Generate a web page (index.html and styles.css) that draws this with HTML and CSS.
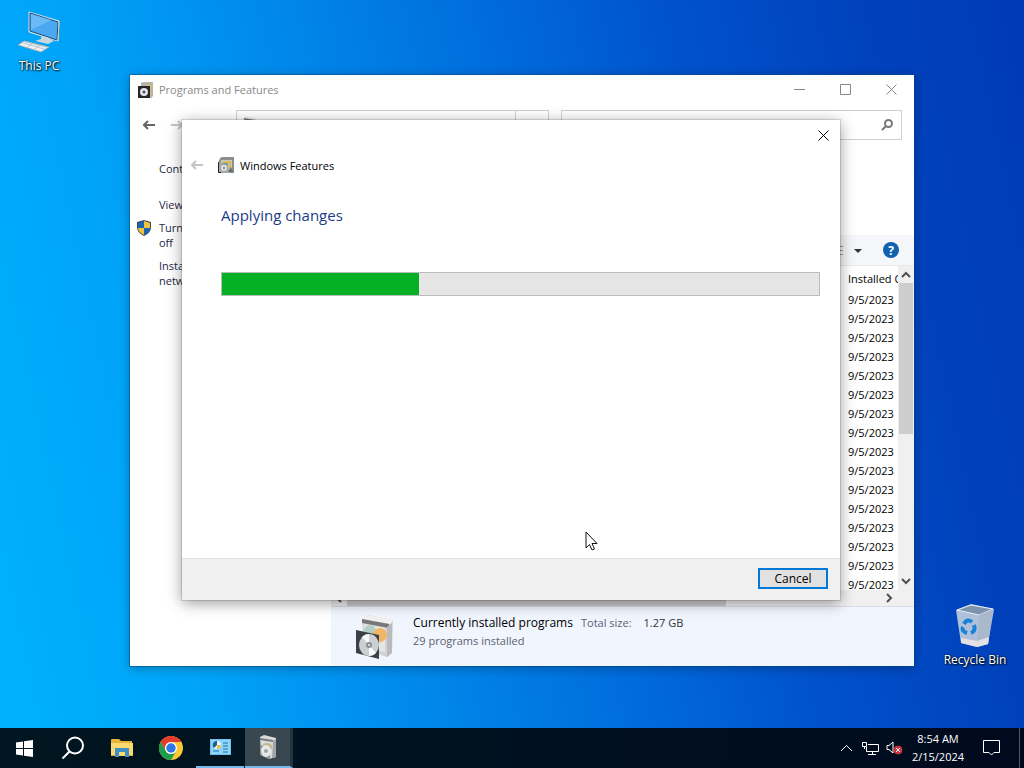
FILE: index.html
```html
<!DOCTYPE html>
<html lang="en">
<head>
    <meta charset="UTF-8">
    <meta name="viewport" content="width=device-width, initial-scale=1.0">
    <title>Windows Features</title>
    <link rel="stylesheet" href="styles.css">
</head>
<body>
    <!-- shared program box icon -->
    <svg class="symbols" aria-hidden="true">
        <symbol id="box-icon" viewBox="0 0 40 46">
            <path d="M7 6 L12 1 L38 6 L37 39 L32 43 L9 36 Z" fill="#d3d3d2"/>
            <path d="M12 1 L38 6 L36 10 L7 5 Z" fill="#f0f0ee"/>
            <path d="M7 5 L34 10 L34 14 L7 9 Z" fill="#77777a"/>
            <path d="M9 10 L30 14 L30 38 L9 34 Z" fill="#e3e9e2"/>
            <path d="M32 13 L37 9 L37 39 L32 43 Z" fill="#b9babd"/>
            <circle cx="15" cy="17" r="6" fill="#b4cfc5"/>
            <circle cx="25" cy="21" r="7" fill="#f0b665"/>
            <path d="M1 16 L24 21 L24 45 L1 39 Z" fill="#3b4046"/>
            <ellipse cx="14" cy="31" rx="10" ry="11" fill="#cdd0d3"/>
            <path d="M14 31 L7 23 A10 11 0 0 1 14 20 Z M14 31 L21 39 A10 11 0 0 1 14 42 Z" fill="#fafafa"/>
            <circle cx="14" cy="31" r="3" fill="#8b9095"/>
            <circle cx="14" cy="31" r="1" fill="#e8e8e8"/>
        </symbol>
    </svg>

    <main class="desktop">
        <a href="#" class="shortcut this-pc">
            <svg width="44" height="44" viewBox="0 0 44 44">
                <path d="M12 2 L42 11 L41 31 L12 22 Z" fill="#bfe4fb" stroke="#d5e2ea"/>
                <path d="M13 3 L41 12 L40 30 L13 21 Z" fill="#4aa8f0" stroke="#1c4d7c"/>
                <path d="M14 4 L34 10 L14 20 Z" fill="#6cbaf5"/>
                <path d="M42 11 L41 31" stroke="#e3c78f"/>
                <path d="M24 26 L30 27 L37 31 L31 34 L18 31 L24 29 Z" fill="#c9d6de"/>
                <path d="M7 31 L32 37 L24 42 L1 35 Z" fill="#eef2f5" stroke="#98aab8"/>
                <path d="M6 33 L27 39 M9 32 L29 37 M11 37 L16 33 M18 39 L23 35" stroke="#b9c5ce"/>
            </svg>
            <span>This PC</span>
        </a>

        <a href="#" class="shortcut recycle-bin">
            <svg width="40" height="46" viewBox="0 0 40 46">
                <path d="M1 8 L16 2 L39 7 L33 42 L22 45 L6 41 Z" fill="#c3cedd" fill-opacity="0.9"/>
                <path d="M2 8 L16 3 L38 7 L24 13 Z" fill="#7e93ae" stroke="#e8f0f8"/>
                <path d="M24 13 L38 7 L33 42 L22 45 Z" fill="#aab8cc"/>
                <path d="M6 36 L22 39 L34 35 L33 42 L22 45 L6 41 Z" fill="#e2e2e4"/>
                <g fill="none" stroke="#1683d8" stroke-width="4">
                    <path d="M9 22 Q12 16 17 20"/>
                    <path d="M19 23 Q21 29 16 31"/>
                    <path d="M12 31 Q6 29 8 25"/>
                </g>
            </svg>
            <span>Recycle Bin</span>
        </a>

        <section class="window">
            <header class="titlebar">
                <svg class="app-icon" width="16" height="16" viewBox="0 0 16 16">
                    <path d="M3 1 L5 0 H15 V14 L13 16 H9 V5 H3 Z" fill="#b7b4aa"/>
                    <path d="M8 3 H13 V13 H10 V5 H8 Z" fill="#e3bd68"/>
                    <rect y="4" width="12" height="12" fill="#23272c"/>
                    <circle cx="6" cy="10" r="4" fill="#e4e6e8"/>
                    <circle cx="6" cy="10" r="1.500" fill="#4c5055"/>
                </svg>
                <span class="window-title">Programs and Features</span>
                <div class="caption-buttons">
                    <button type="button" aria-label="Minimize"><svg width="11" height="11" viewBox="0 0 11 11"><path d="M0 5.500H11"/></svg></button>
                    <button type="button" aria-label="Maximize"><svg width="11" height="11" viewBox="0 0 11 11"><path d="M.5 .5H10.500V10.500H.5Z"/></svg></button>
                    <button type="button" aria-label="Close"><svg width="11" height="11" viewBox="0 0 11 11"><path d="M.5 .5L10.500 10.500M10.500 .5L.5 10.500"/></svg></button>
                </div>
            </header>

            <nav class="nav-row">
                <button type="button" aria-label="Back"><svg class="arrow" width="12" height="10" viewBox="0 0 12 10"><path d="M12 5H1M5 1L1 5L5 9"/></svg></button>
                <button type="button" aria-label="Forward" disabled><svg class="arrow" width="12" height="10" viewBox="0 0 12 10"><path d="M0 5H11M7 1L11 5L7 9"/></svg></button>
                <div class="address">
                    <div class="address-path"><svg width="16" height="18"><use href="#box-icon"/></svg></div>
                    <div class="address-refresh"></div>
                </div>
                <div class="search">
                    <input type="text" aria-label="Search Programs and Features">
                    <svg width="12" height="12" viewBox="0 0 12 12"><circle cx="7.500" cy="4.500" r="3.500"/><path d="M5 7L1 11"/></svg>
                </div>
            </nav>

            <div class="window-body">
                <aside class="sidebar">
                    <a href="#" class="home-link">Control Panel Home</a>
                    <a href="#">View installed updates</a>
                    <a href="#">
                        <svg class="shield" width="16" height="16" viewBox="0 0 16 16">
                            <path d="M8 0L15 2V7Q15 13 8 16Q1 13 1 7V2Z" fill="#3f4852"/>
                            <path d="M8 1V8H2V3Z" fill="#1866b4"/>
                            <path d="M8 1L14 3V8H8Z" fill="#f2c23e"/>
                            <path d="M2 8H8V15Q2 12 2 8Z" fill="#f2c23e"/>
                            <path d="M8 8H14Q14 12 8 15Z" fill="#1866b4"/>
                        </svg>
                        Turn Windows features on or<br>off
                    </a>
                    <a href="#">Install a program from the<br>network</a>
                </aside>

                <div class="content">
                    <div class="toolbar">
                        <button type="button" aria-label="Change your view">
                            <svg width="28" height="12" viewBox="0 0 28 12"><path d="M0 2.500H8M0 6.500H8M0 10.500H8" stroke="#9a9a9a"/><path d="M19 5H27L23 9Z" fill="#333"/></svg>
                        </button>
                        <button type="button" class="help" aria-label="Help">?</button>
                    </div>

                    <div class="list-area">
                        <div class="list">
                            <table>
                                <thead>
                                    <tr><th>Installed On</th></tr>
                                </thead>
                                <tbody>
                                    <tr><td>9/5/2023</td></tr>
                                    <tr><td>9/5/2023</td></tr>
                                    <tr><td>9/5/2023</td></tr>
                                    <tr><td>9/5/2023</td></tr>
                                    <tr><td>9/5/2023</td></tr>
                                    <tr><td>9/5/2023</td></tr>
                                    <tr><td>9/5/2023</td></tr>
                                    <tr><td>9/5/2023</td></tr>
                                    <tr><td>9/5/2023</td></tr>
                                    <tr><td>9/5/2023</td></tr>
                                    <tr><td>9/5/2023</td></tr>
                                    <tr><td>9/5/2023</td></tr>
                                    <tr><td>9/5/2023</td></tr>
                                    <tr><td>9/5/2023</td></tr>
                                    <tr><td>9/5/2023</td></tr>
                                    <tr><td>9/5/2023</td></tr>
                                </tbody>
                            </table>
                        </div>
                        <div class="scrollbar vertical">
                            <svg width="10" height="17" viewBox="0 0 10 17"><path d="M1 11L5 7L9 11"/></svg>
                            <div class="track"><div class="thumb"></div></div>
                            <svg width="10" height="17" viewBox="0 0 10 17"><path d="M1 6L5 10L9 6"/></svg>
                        </div>
                    </div>
                    <div class="scrollbar horizontal">
                        <svg width="16" height="10" viewBox="0 0 16 10"><path d="M10 1L6 5L10 9"/></svg>
                        <div class="track"><div class="thumb"></div></div>
                        <svg width="16" height="10" viewBox="0 0 16 10"><path d="M6 1L10 5L6 9"/></svg>
                    </div>

                    <div class="details">
                        <svg width="40" height="46"><use href="#box-icon"/></svg>
                        <div>
                            <p><strong>Currently installed programs</strong><span>Total size:</span><b>1.27 GB</b></p>
                            <p>29 programs installed</p>
                        </div>
                    </div>
                </div>
            </div>
        </section>

        <section class="dialog" role="dialog" aria-labelledby="dialog-title">
            <div class="dialog-top">
                <button type="button" aria-label="Close"><svg width="11" height="11" viewBox="0 0 11 11"><path d="M.5 .5L10.500 10.500M10.500 .5L.5 10.500"/></svg></button>
            </div>
            <header class="dialog-header">
                <button type="button" aria-label="Back" disabled><svg class="arrow" width="12" height="10" viewBox="0 0 12 10"><path d="M12 5H1M5 1L1 5L5 9"/></svg></button>
                <svg width="16" height="16" viewBox="0 0 16 16">
                    <path d="M2 1L4 0H16V16H1V4Z" fill="#8b8f8c"/>
                    <path d="M3 3H14V15H3Z" fill="#c4cbc0"/>
                    <path d="M5 4H13V12H11V6H5Z" fill="#e2b94c"/>
                    <path d="M4 6H10V10H4Z" fill="#5d9aa8"/>
                    <path d="M0 5V16H12L10 8Z" fill="#a5aaa6"/>
                    <path d="M.5 5V15.500H3" fill="none" stroke="#222"/>
                    <circle cx="6" cy="11" r="3" fill="#dfe3de"/>
                    <circle cx="6" cy="11" r="1" fill="#777"/>
                    <path d="M13 10L15 15H10Z" fill="#5e7470"/>
                </svg>
                <span id="dialog-title">Windows Features</span>
            </header>
            <div class="dialog-body">
                <h1><label for="apply-progress">Applying changes</label></h1>
                <progress id="apply-progress" value="33" max="100"></progress>
            </div>
            <footer class="dialog-footer">
                <button type="button">Cancel</button>
            </footer>
        </section>

        <svg class="cursor" width="13" height="20" viewBox="0 0 13 20">
            <path d="M1 1V17L4.500 13.500L7 19L9.500 18L7 12.500H12Z" fill="#fff" stroke="#111"/>
        </svg>
    </main>

    <footer class="taskbar">
        <button type="button" class="task" aria-label="Start">
            <svg width="17" height="17" viewBox="0 0 17 17" fill="#fff"><path d="M0 2.500L7 1.500V8H0ZM8 1.300L17 0V8H8ZM0 9H7V15.500L0 14.500ZM8 9H17V17L8 15.700Z"/></svg>
        </button>
        <button type="button" class="task" aria-label="Search">
            <svg width="24" height="24" viewBox="0 0 24 24" fill="none" stroke="#fff" stroke-width="2"><circle cx="14" cy="9.500" r="8"/><path d="M8.500 15.500L1.500 22.500"/></svg>
        </button>
        <button type="button" class="task" aria-label="File Explorer">
            <svg width="22" height="18" viewBox="0 0 22 18">
                <path d="M0 1Q0 0 1 0H8L10 2H21V17H0Z" fill="#e8b339"/>
                <path d="M0 4H22V17H0Z" fill="#fbd870"/>
                <path d="M4 9H18V18H14V13H8V18H4Z" fill="#3f8fc4"/>
                <path d="M0 16H4V17H0ZM18 16H22V17H18Z" fill="#e5af35"/>
            </svg>
        </button>
        <button type="button" class="task" aria-label="Google Chrome">
            <svg width="24" height="24" viewBox="0 0 24 24">
                <circle cx="12" cy="12" r="12" fill="#fcc934"/>
                <path d="M1.600 6A12 12 0 0 1 22.400 6H12A6 6 0 0 0 6.800 15Z" fill="#e33b2e"/>
                <path d="M1.600 6A12 12 0 0 0 12 24L17.200 15A6 6 0 0 1 6.800 15Z" fill="#1e9d4c"/>
                <circle cx="12" cy="12" r="6" fill="#fff"/>
                <circle cx="12" cy="12" r="4.700" fill="#2f76e8"/>
            </svg>
        </button>
        <button type="button" class="task open" aria-label="Control Panel">
            <svg width="21" height="16" viewBox="0 0 21 16">
                <path d="M0 0H21V16H0Z" fill="#69c2ef"/>
                <path d="M1 1H20V15H1Z" fill="#8ed5f7"/>
                <circle cx="7" cy="6" r="4" fill="#e9f6fd"/>
                <path d="M7 6V2A4 4 0 0 0 4 9Z" fill="#1b5e95"/>
                <path d="M7 6H11A4 4 0 0 1 7 10Z" fill="#e8c34a"/>
                <path d="M13 4H18M13 7H18M13 10H18M3 12H9M13 13H18" stroke="#1672ae"/>
            </svg>
        </button>
        <button type="button" class="task open active" aria-label="Windows Features">
            <svg width="20" height="24" viewBox="0 0 20 24">
                <path d="M2 2L6 0L18 3V22L11 24L3 20Z" fill="#d9dada"/>
                <path d="M2 3L15 5V7L2 5Z" fill="#77797c"/>
                <path d="M15 6L18 4V22L14 23Z" fill="#a2a5a8"/>
                <ellipse cx="9" cy="12" rx="5" ry="4" fill="#c4b78c"/>
                <path d="M2 10L12 13V24L2 20Z" fill="#8d9093"/>
                <ellipse cx="8" cy="16" rx="5" ry="6" fill="#e7e8e8"/>
                <circle cx="8" cy="16" r="2" fill="#a0a2a4"/>
            </svg>
        </button>

        <div class="tray">
            <button type="button" aria-label="Show hidden icons"><svg width="13" height="8" viewBox="0 0 13 8"><path d="M1 7L6.500 1.500L12 7"/></svg></button>
            <button type="button" aria-label="Network"><svg width="17" height="15" viewBox="0 0 17 15"><path d="M6 3.500H16.500V10.500H4.500V6M10.500 11V13.500M6 13.500H14M.5 1.500H4.500V5.500H.5ZM2.500 5V8"/></svg></button>
            <button type="button" aria-label="Volume">
                <svg width="17" height="16" viewBox="0 0 17 16"><path d="M1 5.500H3L7 2V13L3 9.500H1Z"/><circle class="mute" cx="12" cy="10" r="4"/><path d="M10 8L14 12M14 8L10 12"/></svg>
            </button>
            <time class="clock" datetime="2024-02-15T08:54"><span>8:54 AM</span><span>2/15/2024</span></time>
            <button type="button" class="notifications" aria-label="Notifications"><svg width="17" height="16" viewBox="0 0 17 16"><path d="M.5 .5H16.500V12.500H11L8.500 15L6 12.500H.5Z"/></svg></button>
            <button type="button" class="show-desktop" aria-label="Show desktop"></button>
        </div>
    </footer>
</body>
</html>
```
FILE: styles.css
```css
* {
    margin: 0;
    padding: 0;
    box-sizing: border-box;
}

body {
    font-family: "Open Sans", "Noto Sans", sans-serif;
    font-size: 11px;
    line-height: 15px;
    height: 100vh;
    color: #000;
    display: flex;
    flex-direction: column;
    overflow: hidden;
    background: linear-gradient(78deg, #00b2ff 0%, #00a4f8 18%, #008cec 34%, #0070de 52%, #0052cc 70%, #0042bc 86%, #003ab4 100%);
}

button {
    font: inherit;
    border: none;
    background: none;
    display: flex;
    align-items: center;
    justify-content: center;
}

a {
    text-decoration: none;
}

.symbols {
    width: 0;
    height: 0;
    position: absolute;
}

.desktop {
    flex: 1;
    position: relative;
}

/* Desktop shortcuts */
.shortcut {
    position: absolute;
    width: 76px;
    display: flex;
    flex-direction: column;
    align-items: center;
    gap: 4px;
    font-size: 12px;
    color: #fff;
    text-shadow: 1px 1px 2px #000, 0 0 2px #000;
}

.this-pc {
    left: 1px;
    top: 10px;
}

.recycle-bin {
    right: 11px;
    bottom: 61px;
}

/* Programs and Features window */
.window {
    position: absolute;
    top: 75px;
    right: 110px;
    bottom: 62px;
    left: 130px;
    background-color: #fff;
    display: flex;
    flex-direction: column;
    box-shadow: 0 0 0 1px rgba(0, 70, 130, 0.5), 0 2px 10px rgba(0, 0, 0, 0.3);
}

.titlebar {
    height: 29px;
    display: flex;
    align-items: center;
    padding-left: 8px;
}

.window-title {
    margin-left: 5px;
    color: #888;
}

.caption-buttons {
    display: flex;
    margin-left: auto;
}

.caption-buttons button {
    width: 46px;
    height: 28px;
}

.caption-buttons svg,
.dialog-top svg {
    fill: none;
    stroke: #888;
}

.nav-row {
    height: 42px;
    display: flex;
    align-items: center;
    padding: 0 12px 0 5px;
}

.nav-row > button {
    width: 28px;
    height: 28px;
}

.arrow {
    fill: none;
    stroke: #666;
    stroke-width: 2;
}

button:disabled .arrow {
    stroke: #c4c4c4;
}

.address {
    flex: 312;
    height: 30px;
    margin-left: 45px;
    display: flex;
    border: 1px solid #d0d0d0;
}

.address-path {
    flex: 1;
    padding: 5px 4px;
}

.address-refresh {
    width: 33px;
    border-left: 1px solid #d0d0d0;
}

.search {
    flex: 324;
    height: 30px;
    margin-left: 12px;
    padding: 0 8px;
    display: flex;
    align-items: center;
    border: 1px solid #d0d0d0;
}

.search input {
    flex: 1;
    min-width: 0;
    height: 28px;
    border: none;
    outline: none;
    font: inherit;
}

.search svg {
    fill: none;
    stroke: #777;
    stroke-width: 2;
}

.window-body {
    flex: 1;
    min-height: 0;
    display: flex;
}

.sidebar {
    width: 201px;
    padding: 15px 4px 0 29px;
    display: flex;
    flex-direction: column;
    gap: 8px;
}

.sidebar a {
    position: relative;
    color: #1f1f47;
}

.sidebar .home-link {
    margin-bottom: 13px;
}

/* sits in the gutter left of the link */
.shield {
    position: absolute;
    left: -23px;
    top: 0;
}

.content {
    flex: 1;
    min-width: 0;
    display: flex;
    flex-direction: column;
    padding-top: 89px;
}

.toolbar {
    height: 31px;
    display: flex;
    align-items: center;
    justify-content: flex-end;
    gap: 20px;
    padding-right: 15px;
    background-color: #f5f6f9;
    border-bottom: 1px solid #e8eaee;
}

.help {
    width: 16px;
    height: 16px;
    border-radius: 50%;
    color: #fff;
    background-color: #0f62b0;
    font-size: 12px;
    font-weight: bold;
}

.list-area {
    flex: 1;
    min-height: 0;
    display: flex;
}

.list {
    flex: 1;
    display: flex;
    justify-content: flex-end;
    overflow: hidden;
}

table {
    width: 56px;
    table-layout: fixed;
    border-collapse: collapse;
    align-self: flex-start;
}

th,
td {
    height: 19px;
    padding-left: 6px;
    text-align: left;
    font-weight: normal;
    white-space: nowrap;
}

th {
    height: 24px;
    overflow: hidden;
}

.scrollbar {
    display: flex;
    align-items: center;
    background-color: #f0f0f0;
}

.scrollbar svg {
    fill: none;
    stroke: #505050;
    stroke-width: 2;
}

.scrollbar .track {
    flex: 1;
}

.thumb {
    background-color: #cdcdcd;
}

.vertical {
    width: 16px;
    flex-direction: column;
}

.vertical .track {
    width: 14px;
}

.vertical .thumb {
    height: 52%;
}

.horizontal {
    height: 16px;
    padding-right: 17px;
}

.horizontal .thumb {
    width: 71%;
    height: 16px;
}

.details {
    height: 60px;
    display: flex;
    gap: 18px;
    padding: 7px 24px;
    background-color: #f1f5fd;
    border-top: 1px solid #d9dce4;
}

.details p {
    line-height: 18px;
    color: #5a6272;
}

.details strong {
    font-size: 12px;
    font-weight: normal;
    color: #000;
    margin-right: 8px;
}

.details b {
    font-weight: normal;
    color: #333;
    margin-left: 12px;
}

/* Windows Features dialog */
.dialog {
    position: absolute;
    top: 120px;
    right: 184px;
    bottom: 128px;
    left: 182px;
    background-color: #fff;
    display: flex;
    flex-direction: column;
    box-shadow: 0 0 0 1px rgba(0, 0, 0, 0.12), 0 3px 14px rgba(0, 0, 0, 0.4);
}

.dialog-top {
    display: flex;
    justify-content: flex-end;
}

.dialog-top button {
    width: 33px;
    height: 30px;
}

.dialog-top svg {
    stroke: #000;
}

.dialog-header {
    height: 30px;
    display: flex;
    align-items: center;
    gap: 6px;
}

.dialog-header button {
    width: 30px;
    height: 30px;
}

.dialog-body {
    flex: 1;
    padding: 23px 20px 0 39px;
}

.dialog-body h1 {
    font-size: 15px;
    line-height: 24px;
    font-weight: normal;
    color: #1b3c87;
}

progress {
    appearance: none;
    display: block;
    width: 100%;
    height: 24px;
    margin-top: 45px;
    border: 1px solid #bcbcbc;
    background-color: #e6e6e6;
}

progress::-webkit-progress-bar {
    background-color: #e6e6e6;
}

progress::-webkit-progress-value {
    background-color: #06b025;
}

.dialog-footer {
    height: 42px;
    display: flex;
    justify-content: flex-end;
    align-items: flex-start;
    padding: 9px 12px 0;
    background-color: #f0f0f0;
    border-top: 1px solid #dfdfdf;
}

.dialog-footer button {
    width: 70px;
    height: 21px;
    font-size: 12px;
    line-height: 15px;
    background-color: #e1e1e1;
    border: 2px solid #0078d7;
}

.cursor {
    position: absolute;
    left: 585px;
    top: 531px;
}

/* Taskbar */
.taskbar {
    height: 40px;
    display: flex;
    gap: 1px;
    color: #fff;
    background: linear-gradient(90deg, #001620, #000f20 60%, #000a1e);
}

.task {
    width: 48px;
    height: 40px;
}

.open {
    border-bottom: 2px solid #76b9ed;
}

.active {
    background-color: #384750;
    border-right: 3px solid #24343f;
}

.tray {
    display: flex;
    align-items: center;
    margin-left: auto;
}

.tray button {
    width: 24px;
    height: 40px;
}

.tray svg {
    fill: none;
    stroke: #fff;
}

.tray .mute {
    fill: #c8323a;
    stroke: #c8323a;
}

.clock {
    width: 64px;
    text-align: center;
    line-height: 18px;
}

.clock span {
    display: block;
}

.tray .notifications {
    width: 42px;
}

.tray .show-desktop {
    width: 5px;
    margin-left: 7px;
    border-left: 1px solid #4d5a68;
}
```
